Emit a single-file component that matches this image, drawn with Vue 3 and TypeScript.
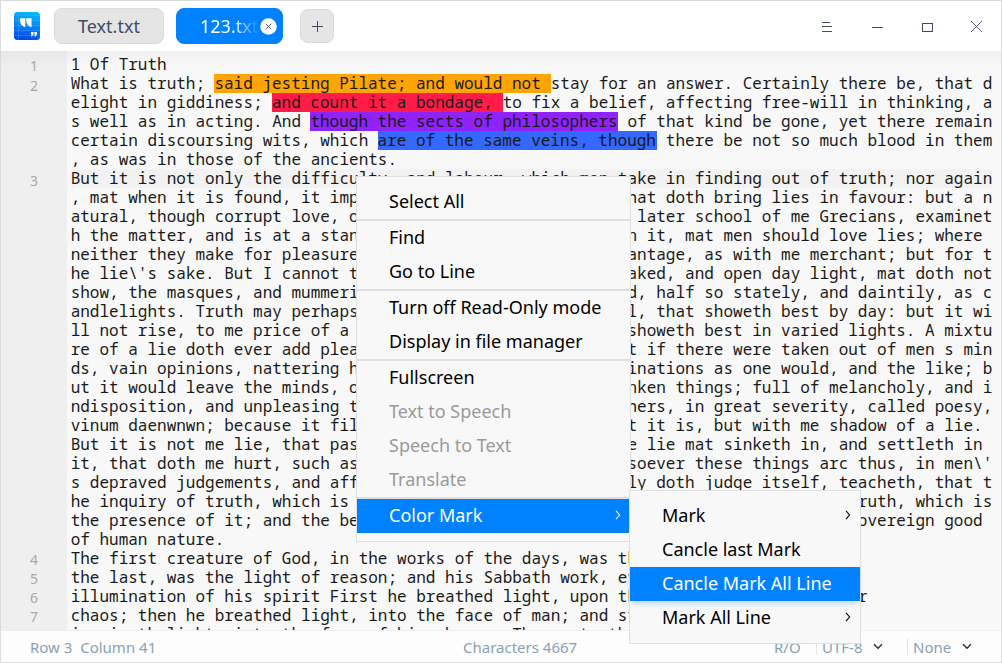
<script setup lang="ts">
interface Segment { text: string; mark?: string }
interface Row { no?: number; segments: Segment[]; current?: boolean }
interface MenuItem { label: string; disabled?: boolean; active?: boolean; arrow?: boolean; separated?: boolean }

const COLUMNS = 96

function plain(text: string, no?: number): Row {
  return { no, segments: [{ text }] }
}

// Keeps `right` flush with column `end`, leaving blank cells in between.
function split(left: string, right: string, end = COLUMNS): Row {
  return plain(left.padEnd(end - right.length) + right)
}

const rows: Row[] = [
  plain('1 Of Truth', 1),
  { no: 2, segments: [
    { text: 'What is truth; ' },
    { text: 'said jesting Pilate; and would not ', mark: 'orange' },
    { text: 'stay for an answer. Certainly there be, that d' },
  ] },
  { segments: [
    { text: 'elight in giddiness; ' },
    { text: 'and count it a bondage, ', mark: 'red' },
    { text: 'to fix a belief, affecting free-will in thinking, a' },
  ] },
  { segments: [
    { text: 's well as in acting. And ' },
    { text: 'though the sects of philosophers', mark: 'purple' },
    { text: ' of that kind be gone, yet there remain' },
  ] },
  { segments: [
    { text: 'certain discoursing wits, which ' },
    { text: 'are of the same veins, though', mark: 'blue' },
    { text: ' there be not so much blood in them' },
  ] },
  plain(', as was in those of the ancients.'),
  { no: 3, current: true, segments: [
    { text: 'But it is not only the difficulty, and labour, which men take in finding out of truth; nor again' },
  ] },
  split(', mat when it is found, it imp', 'hat doth bring lies in favour: but a n'),
  split('atural, though corrupt love, o', 'later school of me Grecians, examinet'),
  split('h the matter, and is at a stan', 'n it, mat men should love lies; where '),
  split('neither they make for pleasure', 'antage, as with me merchant; but for t'),
  split("he lie\\'s sake. But I cannot t", 'aked, and open day light, mat doth not'),
  split('show, the masques, and mummeri', 'd, half so stately, and daintily, as c'),
  split('andlelights. Truth may perhaps', 'l, that showeth best by day: but it wi'),
  split('ll not rise, to me price of a ', 'showeth best in varied lights. A mixtu'),
  split('re of a lie doth ever add plea', 't if there were taken out of men s min'),
  split('ds, vain opinions, nattering h', 'inations as one would, and the like; b'),
  split('ut it would leave the minds, o', 'nken things; full of melancholy, and i'),
  split('ndisposition, and unpleasing t', 'hers, in great severity, called poesy,'),
  split('vinum daenwnwn; because it fil', 't it is, but with me shadow of a lie. '),
  split('But it is not me lie, that pas', 'e lie mat sinketh in, and settleth in '),
  split('it, that doth me hurt, such as', "soever these things arc thus, in men\\'"),
  split('s depraved judgements, and aff', 'ly doth judge itself, teacheth, that t'),
  split('he inquiry of truth, which is ', 'truth, which is'),
  split('the presence of it; and the be', 'sovereign good '),
  plain('of human nature.'),
  plain('The first creature of God, in the works of the days, was th', 4),
  plain('the last, was the light of reason; and his Sabbath work, ev', 5),
  plain('illumination of his spirit First he breathed light, upon the face, of the matter or', 6),
  plain('chaos; then he breathed light, into the face of man; and st', 7),
  plain('inspireth light, into the face of his chosen. The poet, tha'),
]

const menu: MenuItem[] = [
  { label: 'Select All' },
  { label: 'Find', separated: true },
  { label: 'Go to Line' },
  { label: 'Turn off Read-Only mode', separated: true },
  { label: 'Display in file manager' },
  { label: 'Fullscreen', separated: true },
  { label: 'Text to Speech', disabled: true },
  { label: 'Speech to Text', disabled: true },
  { label: 'Translate', disabled: true },
  { label: 'Color Mark', separated: true, active: true, arrow: true },
]

const submenu: MenuItem[] = [
  { label: 'Mark', arrow: true },
  { label: 'Cancle last Mark' },
  { label: 'Cancle Mark All Line', active: true },
  { label: 'Mark All Line', arrow: true },
]
</script>

<template>
  <div class="window">
    <header class="titlebar">
      <svg class="logo" width="26" height="28" viewBox="0 0 26 28">
        <defs>
          <linearGradient id="logo-fill" x1="0.6" y1="0" x2="0.4" y2="1">
            <stop offset="0" stop-color="#04b8fb" />
            <stop offset="0.5" stop-color="#0783f5" />
            <stop offset="1" stop-color="#0546e4" />
          </linearGradient>
        </defs>
        <rect width="26" height="28" rx="3.5" fill="url(#logo-fill)" />
        <path d="M0 3.5h26M0 8.5h26M0 13.5h26M0 18.5h26M0 23.5h26M4.5 0v28" stroke="#5fc4ff" stroke-opacity="0.25" fill="none" />
        <path d="M6 6.200h5.300v9C8 14.200 6 12 6 8.500zM12.200 6.200h5.300v9C14.200 14.200 12.200 12 12.200 8.500z" fill="#fff" />
        <path d="M17 20h2.600v2.200l-1.700 2.300h-1l.8-2H17zM20.400 20H23v2.200l-1.700 2.300h-1l.8-2h-.7z" fill="#fff" />
      </svg>
      <button class="tab"><span class="tab-label">Text.txt</span></button>
      <button class="tab selected">
        <span class="tab-label fading">123.txt</span>
        <svg class="tab-close" width="17" height="17" viewBox="0 0 17 17">
          <circle cx="8.500" cy="8.500" r="8.300" fill="#fff" />
          <path d="M5.800 5.800l5.400 5.400M11.200 5.800l-5.400 5.400" stroke="#414d68" stroke-width="0.9" />
        </svg>
      </button>
      <button class="add">
        <svg width="12" height="12" viewBox="0 0 12 12"><path d="M6.500 1v11M1 6.500h11" stroke="#414d68" /></svg>
      </button>
      <div class="controls">
        <svg width="12" height="12" viewBox="0 0 12 12"><path d="M1 2.500h8M1 6.500h10M1 11.500h10" stroke="#414d68" /></svg>
        <svg width="12" height="12" viewBox="0 0 12 12"><path d="M1 7.500h11" stroke="#414d68" /></svg>
        <svg width="12" height="12" viewBox="0 0 12 12"><rect x="1.500" y="3.500" width="10" height="8" fill="none" stroke="#414d68" /></svg>
        <svg width="12" height="12" viewBox="0 0 12 12"><path d="M0 1l11 11M11 1L0 12" stroke="#414d68" stroke-width="0.9" /></svg>
      </div>
    </header>

    <main class="editor">
      <div v-for="(row, i) in rows" :key="i" class="row">
        <span class="number" :class="{ low: row.no === 2 || row.no === 3 }">{{ row.no }}</span>
        <span class="code" :class="{ current: row.current }"><span v-for="(seg, j) in row.segments" :key="j" :class="seg.mark && ['mark', seg.mark]">{{ seg.text }}</span></span>
      </div>
    </main>

    <footer class="statusbar">
      <span class="position">Row 3&nbsp; Column 41</span>
      <span class="count">Characters 4667</span>
      <div class="modes">
        <span class="readonly">R/O</span>
        <span class="picker encoding">UTF-8
          <svg width="10" height="7" viewBox="0 0 10 7"><path d="M1 1.200l4 4 4-4" fill="none" stroke="#333" stroke-width="1.500" /></svg>
        </span>
        <span class="picker">None
          <svg width="10" height="7" viewBox="0 0 10 7"><path d="M1 1.200l4 4 4-4" fill="none" stroke="#333" stroke-width="1.500" /></svg>
        </span>
      </div>
    </footer>

    <nav class="menu context">
      <div v-for="item in menu" :key="item.label" class="item" :class="{ active: item.active, disabled: item.disabled, separated: item.separated }">
        <span>{{ item.label }}</span>
        <svg v-if="item.arrow" width="6" height="10" viewBox="0 0 6 10"><path d="M1 0.800l3.600 4.200L1 9.200" fill="none" stroke="currentColor" stroke-width="1.100" /></svg>
      </div>
    </nav>
    <nav class="menu sub">
      <div v-for="item in submenu" :key="item.label" class="item" :class="{ active: item.active }">
        <span>{{ item.label }}</span>
        <svg v-if="item.arrow" width="6" height="10" viewBox="0 0 6 10"><path d="M1 0.800l3.600 4.200L1 9.200" fill="none" stroke="currentColor" stroke-width="1.100" /></svg>
      </div>
    </nav>
  </div>
</template>

<style scoped>
.window {
  position: relative;
  box-sizing: border-box;
  width: 1002px;
  height: 663px;
  border: 1px solid #dcdcdc;
  display: flex;
  flex-direction: column;
  overflow: hidden;
  background: #f8f8f8;
  font-family: "Noto Sans", "Open Sans", sans-serif;
}
.titlebar {
  flex: none;
  height: 50px;
  display: flex;
  align-items: center;
  background: #fff;
  padding-left: 13px;
}
.logo { margin-right: 14px; }
.tab {
  position: relative;
  box-sizing: border-box;
  width: 110px;
  height: 36px;
  margin-right: 12px;
  padding: 0;
  border: 1px solid #dadada;
  border-radius: 8px;
  background: #e5e5e5;
  color: #414d68;
  font: 18px/34px "Noto Sans", sans-serif;
}
.tab.selected {
  width: 107px;
  margin-right: 17px;
  border-color: #0081ff;
  background: #0081ff;
  color: #fff;
  display: flex;
  align-items: center;
  padding-left: 23px;
}
.fading {
  width: 59px;
  overflow: hidden;
  text-align: left;
  mask-image: linear-gradient(to right, #000 55%, transparent 100%);
}
.tab-close { flex: none; margin-left: 1px; }
.add {
  width: 34px;
  height: 34px;
  padding: 0;
  border: 1px solid #dadada;
  border-radius: 8px;
  background: #e5e5e5;
  display: flex;
  align-items: center;
  justify-content: center;
}
.controls {
  margin-left: auto;
  margin-right: 18px;
  display: flex;
  gap: 38px;
}
.editor {
  flex: 1;
  min-height: 0;
  overflow: hidden;
  padding-top: 4px;
  background:
    linear-gradient(rgba(0, 0, 0, 0.035), transparent 15px),
    linear-gradient(to right, #efefef 66px, #f8f8f8 66px);
}
.row {
  height: 19px;
  display: flex;
}
.number {
  box-sizing: border-box;
  width: 70px;
  padding-right: 33px;
  text-align: right;
  font-size: 14px;
  line-height: 21px;
  color: #a9a9a9;
}
.low { line-height: 23px; }
.code {
  width: 921px;
  height: 19px;
  white-space: pre;
  font: 16px/19px "Noto Sans Mono", "DejaVu Sans Mono", monospace;
  color: #1a1a1a;
}
.code span { display: inline-block; height: 19px; vertical-align: top; }
.code span:first-child { margin-left: -0.35px; }
.code .mark { margin-left: -0.3px; padding-right: 0.6px; margin-right: -0.3px; }
.current { background: #f2f2f2; }
.orange { background: #ffa503; }
.red { background: #ff1c49; }
.purple { background: #9023fc; }
.blue { background: #3468ff; }
.statusbar {
  flex: none;
  box-sizing: border-box;
  height: 32px;
  border-top: 1px solid #eee;
  background: #fdfdfd;
  display: grid;
  grid-template-columns: 462px 311px 1fr;
  align-items: center;
  font-size: 15px;
  line-height: 20px;
  color: #8aa1b4;
}
.position { padding-left: 29px; }
.modes { display: flex; align-items: center; }
.readonly { width: 42px; }
.picker {
  box-sizing: border-box;
  display: flex;
  align-items: center;
  height: 17px;
  padding-left: 5px;
  border-left: 1px solid #e4e4e4;
  gap: 10.500px;
}
.encoding { width: 91px; }
.menu {
  position: absolute;
  box-sizing: border-box;
  padding: 8px 0;
  border: 1px solid #dfdfdf;
  background: #f8f8f8;
  color: #000;
  font-size: 18px;
}
.context { left: 355px; top: 175px; width: 275px; }
.sub { left: 628px; top: 489px; width: 232px; }
.item {
  box-sizing: border-box;
  height: 34px;
  line-height: 32px;
  padding: 0 9px 2px 32px;
  display: flex;
  align-items: center;
  justify-content: space-between;
}
.separated { height: 36px; border-top: 2px solid #dfdfdf; }
.disabled { color: #9a9a9a; }
.active { background: #0081ff; color: #fff; }
.sub .active { box-shadow: 0 4px 6px -2px rgba(0, 129, 255, 0.3); }
</style>
